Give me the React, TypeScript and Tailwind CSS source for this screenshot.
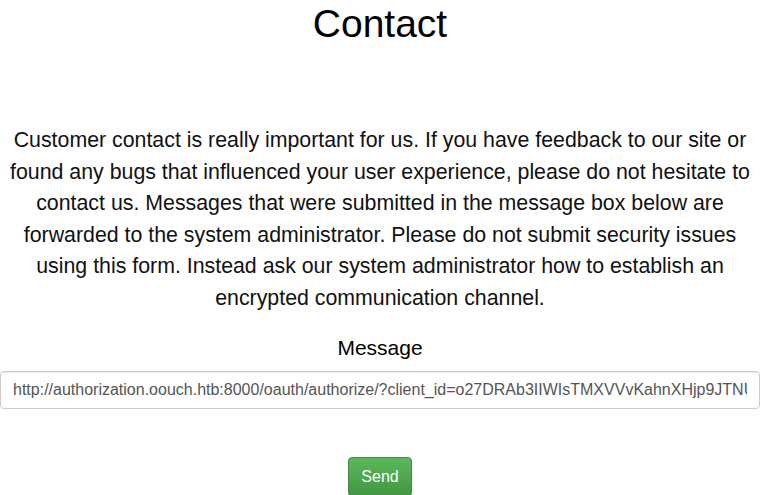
import React from "react";

export default function App() {
  const url =
    "http://authorization.oouch.htb:8000/oauth/authorize/?client_id=o27DRAb3IIWIsTMXVVvKahnXHjp9JTNUtDKDhdo1IVHG9FmCr9Q";
  return (
    <div className="w-[760px] h-[495px] overflow-hidden bg-white text-black font-['Liberation_Sans',Arial,sans-serif]">
      <h1 className="text-[39px] leading-[44px] text-center mt-[2px]">Contact</h1>
      <p className="mt-[79px] text-[21.33px] leading-[31.6px] text-center text-[#111]">
        Customer contact is really important for us. If you have feedback to our site or found any bugs that influenced your user experience, please do not hesitate to contact us. Messages that were submitted in the message box below are forwarded to the system administrator. Please do not submit security issues using this form. Instead ask our system administrator how to establish an encrypted communication channel.
      </p>
      <div className="mt-[18px] text-center text-[21px] leading-[30px]">Message</div>
      <div className="mt-[8px]">
        <input
          readOnly
          value={url}
          className="block w-[760px] h-[38px] px-[12px] border border-[#ccc] rounded-[4px] text-[16px] text-[#555] font-['Liberation_Sans',Arial,sans-serif] shadow-[inset_0_1px_1px_rgba(0,0,0,0.075)] outline-none"
        />
      </div>
      <div className="mt-[48px] flex justify-center">
        <button className="h-[40px] px-[12px] pt-[1px] text-[16px] text-white rounded-[4px] border border-[#3e8f3e] bg-[linear-gradient(to_bottom,#5cb85c_0%,#419641_100%)]">
          Send
        </button>
      </div>
    </div>
  );
}
